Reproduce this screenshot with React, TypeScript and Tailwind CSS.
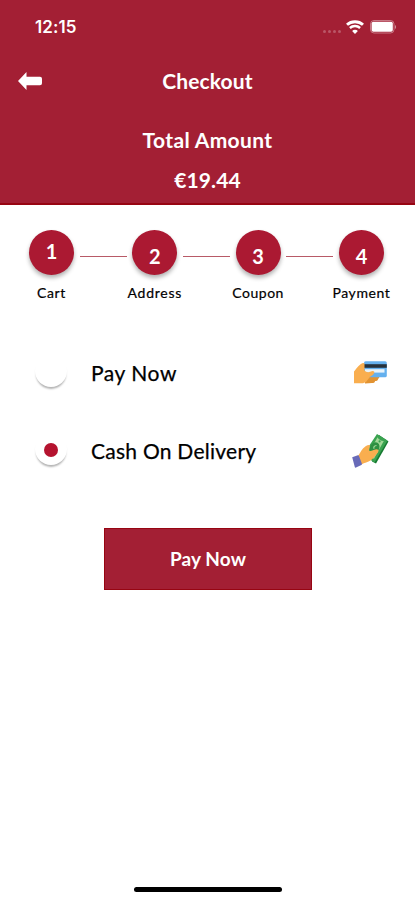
import React, { useState } from "react";

interface Step {
  id: number;
  label: string;
  labelClass: string;
  numberClass: string;
}

const steps: Step[] = [
  { id: 1, label: "Cart", labelClass: "tracking-[0.6px]", numberClass: "pb-[3px]" },
  { id: 2, label: "Address", labelClass: "tracking-[0.75px]", numberClass: "pt-[7px]" },
  { id: 3, label: "Coupon", labelClass: "tracking-[0.5px]", numberClass: "pt-[7px]" },
  { id: 4, label: "Payment", labelClass: "tracking-[0.6px]", numberClass: "pt-[7px]" },
];

const StatusBar = () => (
  <div className="flex h-[54px] items-center justify-between pl-[35px] pr-[18px]">
    <span className="text-[17px] font-semibold leading-none tracking-[0.1px] font-['Inter',sans-serif]">
      12:15
    </span>
    <div className="flex items-center">
      <div className="mr-[5px] mt-[8px] flex gap-[2px]">
        <i className="size-[3px] rounded-full bg-white/25" />
        <i className="size-[3px] rounded-full bg-white/25" />
        <i className="size-[3px] rounded-full bg-white/25" />
        <i className="size-[3px] rounded-full bg-white/25" />
      </div>
      <svg width="18" height="14" viewBox="0 0 18 14" fill="none">
        <path d="M1 4.7C5.3.7 12.7.7 17 4.7" stroke="white" strokeWidth="2.9" />
        <path d="M3.9 8c2.8-2.6 7.4-2.6 10.2 0" stroke="white" strokeWidth="2.4" />
        <path d="M6.1 10.9c1.6-1.5 4.2-1.5 5.8 0L9 13.9z" fill="white" />
      </svg>
      <svg className="ml-[6px]" width="27" height="14" viewBox="0 0 27 14" fill="none">
        <rect x="0.5" y="0.5" width="23.5" height="12.5" rx="3.5" stroke="white" strokeOpacity="0.4" />
        <rect x="1.6" y="1.7" width="21.2" height="10.1" rx="1.8" fill="white" />
        <path d="M25 5v4c1.2-.5 1.2-3.5 0-4z" fill="white" fillOpacity="0.6" />
      </svg>
    </div>
  </div>
);

const CardIcon = () => (
  <svg width="36" height="26" viewBox="0 0 36 26">
    <path d="M12 16h14q1 2-1 3 0 2-3 2 0 2-3 2l-7 .5z" fill="#e29332" />
    <rect x="11" y="1.3" width="22.8" height="16" rx="1.6" fill="#64b0ee" />
    <path d="M11 4.2h22.8v3.6H11z" fill="#26323c" />
    <path d="M12 9.2h19.5v3.4H12z" fill="#e9f4fb" />
    <path
      d="M1 11.5C4 8 6.5 4 10 3q1.5-.3 1.5 1.3v6.2q1.5 2 4 1.8l4-1.3q2.4-.1 1.8 2-1 2.2-4.3 3.7L13 22l-3 1.3H1z"
      fill="#f9ae4f"
    />
  </svg>
);

const CashIcon = () => (
  <svg width="38" height="36" viewBox="0 0 38 36">
    <path d="m28 2 9.5 6.5L25 30.5l-4-2z" fill="#167a31" />
    <path d="M26 1 36.5 7.5 23.5 29.5 12 22z" fill="#3aa350" />
    <path d="M26.5 4.2q1.5 3.3 6.3 3.8L23 25.8q-3.8-2.4-7-1.8z" fill="#a2d897" />
    <ellipse cx="23.5" cy="15" rx="4.6" ry="6" transform="rotate(31 23.5 15)" fill="#2f9042" />
    <path d="M25.5 12.5q-3.6.5-2.4 3.2" stroke="#a2d897" strokeWidth="1.2" fill="none" />
    <circle cx="28.6" cy="8.4" r="1.1" fill="#3aa350" />
    <path
      d="M6.5 23.5c2-2 3.2-5.5 5.5-8 2-2.2 4.5-3.8 6.4-3.5 1.3.4-.2 3.5-.3 5.5 1.6 1.5 4-.8 7-1.2 2.3-.2 3 1.7 1.8 3.2-2.3 2.8-4.2 5.7-7 7.8-3 2-6.5 2.3-9.4 4.2z"
      fill="#f9ae4f"
    />
    <path d="m1.2 24.3 5.6-2q.8-.2 1.1.5l3 8q.2.8-.5 1.1l-5.4 2.7q-1 .3-1.2-.5z" fill="#686ab8" />
  </svg>
);

interface PaymentOptionProps {
  label: string;
  textClass: string;
  selected: boolean;
  onSelect: () => void;
  icon: React.ReactNode;
}

const PaymentOption: React.FC<PaymentOptionProps> = ({
  label,
  textClass,
  selected,
  onSelect,
  icon,
}) => (
  <button
    role="radio"
    aria-checked={selected}
    onClick={onSelect}
    className="flex h-[78px] w-full items-center pl-[35px] pr-[26px] text-left"
  >
    <span className="mt-[-4px] flex size-8 items-center justify-center rounded-full bg-white shadow-[0_3px_2px_-1px_rgba(0,0,0,0.3)]">
      {selected && <span className="mt-[2px] size-[14px] rounded-full bg-[#b5132f]" />}
    </span>
    <span className={`ml-6 flex-1 text-black [-webkit-text-stroke:0.25px_black] ${textClass}`}>
      {label}
    </span>
    {icon}
  </button>
);

const App = () => {
  const [method, setMethod] = useState("cash");

  return (
    <div className="flex h-[900px] w-[415px] flex-col overflow-hidden bg-white font-['Lato',sans-serif]">
      <header className="h-[205px] shrink-0 border-b-2 border-[#970512] bg-[#a31f34] text-white">
        <StatusBar />
        <div className="grid h-[54px] grid-cols-[60px_1fr_60px] items-center">
          <button aria-label="Back" className="pl-[18px]">
            <svg width="24" height="18" viewBox="0 0 24 18">
              <path d="M0 9 8.5 0v4.8H22q2 0 2 2v4.4q0 2-2 2H8.5V18z" fill="white" />
            </svg>
          </button>
          <h1 className="text-center text-[21px] font-bold tracking-[0.1px]">Checkout</h1>
        </div>
        <div className="mt-[12px] text-center font-bold">
          <p className="text-[21px] leading-[40px] tracking-[0.35px]">Total Amount</p>
          <p className="text-[21px] leading-[40px] tracking-[0.1px]">€19.44</p>
        </div>
      </header>

      <div className="mt-[25px] flex shrink-0 items-start justify-between pl-[21px] pr-[24px]">
        {steps.map((step, index) => (
          <React.Fragment key={step.id}>
            {index > 0 && <div className="mt-[26px] h-px w-[47px] bg-[#b85a67]" />}
            <div className="flex w-[45px] flex-col items-center first:ml-[8px] last:mr-[7px]">
              <div
                className={`flex size-[45px] items-center justify-center rounded-full bg-[#ab1932] text-[20px] font-bold text-white shadow-[0_3px_4px_rgba(0,0,0,0.3)] ${step.numberClass}`}
              >
                {step.id}
              </div>
              <span
                className={`mt-[8px] text-[14px] leading-5 text-black [-webkit-text-stroke:0.2px_black] ${step.labelClass}`}
              >
                {step.label}
              </span>
            </div>
          </React.Fragment>
        ))}
      </div>

      <div role="radiogroup" className="mt-[31px]">
        <PaymentOption
          label="Pay Now"
          textClass="text-[21px] tracking-[0.55px]"
          selected={method === "card"}
          onSelect={() => setMethod("card")}
          icon={<CardIcon />}
        />
        <PaymentOption
          label="Cash On Delivery"
          textClass="text-[21px] tracking-[0.25px]"
          selected={method === "cash"}
          onSelect={() => setMethod("cash")}
          icon={<CashIcon />}
        />
      </div>

      <button className="ml-[104px] mt-[38px] h-[62px] w-[208px] shrink-0 border border-[#970512] bg-[#a31f34] text-[19px] font-bold tracking-[0.1px] text-white">
        Pay Now
      </button>

      <div className="mx-auto mb-[8px] mt-auto h-[5px] w-[148px] rounded-full bg-black" />
    </div>
  );
};

export default App;
